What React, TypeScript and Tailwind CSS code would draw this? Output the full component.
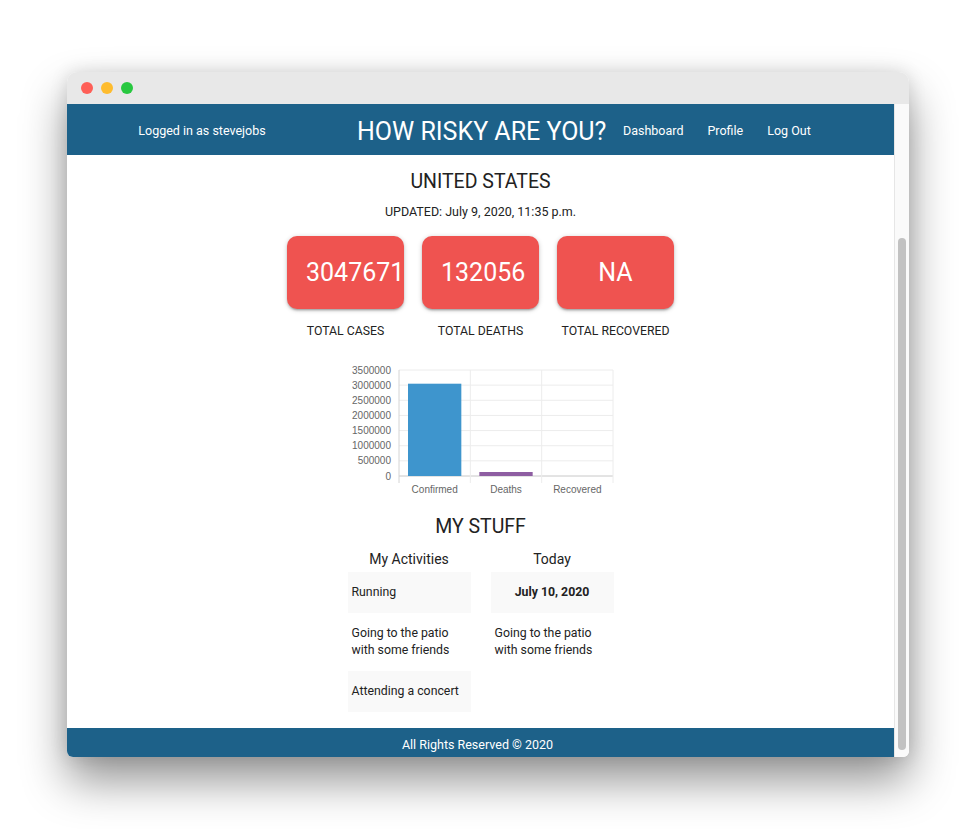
import React from "react";

const stats = [
  { value: "3047671", label: "TOTAL CASES" },
  { value: "132056", label: "TOTAL DEATHS" },
  { value: "NA", label: "TOTAL RECOVERED" },
];

const yTicks = ["3500000", "3000000", "2500000", "2000000", "1500000", "1000000", "500000", "0"];

function BarChart() {
  // chart area in svg coords: x 58..272, y 8..114
  const left = 58;
  const right = 272;
  const top = 8;
  const bottom = 114;
  const step = (bottom - top) / 7;
  const col = (right - left) / 3;
  const max = 3500000;
  const bars = [
    { label: "Confirmed", value: 3047671, color: "#3e95cd" },
    { label: "Deaths", value: 132056, color: "#8e5ea2" },
    { label: "Recovered", value: 0, color: "#3cba9f" },
  ];
  return (
    <svg width="280" height="136" viewBox="0 0 280 136" className="block">
      {yTicks.map((t, i) => {
        const y = top + i * step;
        return (
          <g key={t}>
            <line x1={left} x2={right} y1={y} y2={y} stroke={i === 7 ? "#c8c8c8" : "#ececec"} strokeWidth="1" />
            <text x={left - 8} y={y + 3.5} textAnchor="end" fontSize="10" fill="#666" fontFamily="Liberation Sans, Arial, sans-serif">
              {t}
            </text>
          </g>
        );
      })}
      {[0, 1, 2, 3].map((i) => {
        const x = left + i * col;
        return <line key={i} x1={x} x2={x} y1={top} y2={bottom + 7} stroke={i === 0 ? "#d4d4d4" : "#ececec"} strokeWidth="1" />;
      })}
      {bars.map((b, i) => {
        const h = (b.value / max) * (bottom - top);
        const x = left + i * col + 9;
        return (
          <g key={b.label}>
            {h > 0 && <rect x={x} y={bottom - h} width={col - 18} height={h} fill={b.color} />}
            <text x={left + i * col + col / 2} y={bottom + 17} textAnchor="middle" fontSize="10" fill="#666" fontFamily="Liberation Sans, Arial, sans-serif">
              {b.label}
            </text>
          </g>
        );
      })}
    </svg>
  );
}

export default function App() {
  return (
    <div className="min-h-[829px] w-[976px] bg-white pl-[67px] pt-[72px] font-['Roboto',sans-serif]">
      <div className="flex h-[685px] w-[842px] flex-col overflow-hidden rounded-t-[10px] rounded-b-[6px] bg-white shadow-[0_24px_45px_rgba(0,0,0,0.42),0_0_18px_rgba(0,0,0,0.12)]">
        {/* title bar */}
        <div className="flex h-8 shrink-0 items-center gap-2 bg-[#e8e8e8] pl-[14px]">
          <span className="h-[12px] w-[12px] rounded-full bg-[#fe5f57]" />
          <span className="h-[12px] w-[12px] rounded-full bg-[#febc2e]" />
          <span className="h-[12px] w-[12px] rounded-full bg-[#28c840]" />
        </div>

        <div className="flex min-h-0 flex-1">
          <div className="flex min-w-0 flex-1 flex-col overflow-hidden">
            {/* header */}
            <header className="flex h-[51px] shrink-0 items-center bg-[#1d6189] pt-1 text-white">
              <div className="w-[270px] text-center text-[12.5px]">Logged in as stevejobs</div>
              <div className="ml-5 w-[266px] text-[25px] leading-none">HOW RISKY ARE YOU?</div>
              <nav className="flex gap-6 text-[12.5px]">
                <a>Dashboard</a>
                <a>Profile</a>
                <a>Log Out</a>
              </nav>
            </header>

            {/* main */}
            <main className="flex flex-col items-center text-[#222]">
              <h1 className="mt-[15px] text-[19.5px] leading-6">UNITED STATES</h1>
              <p className="mt-[11px] text-[12.5px] leading-[14px]">UPDATED: July 9, 2020, 11:35 p.m.</p>

              <div className="mt-[17px] flex gap-[18px]">
                {stats.map((s) => (
                  <div key={s.label} className="flex w-[117px] flex-col items-center">
                    <div className="h-[73px] w-full rounded-[10px] bg-[#ef5350] px-[19px] text-center shadow-[0_2px_2px_rgba(0,0,0,0.14),0_3px_1px_-2px_rgba(0,0,0,0.12),0_1px_5px_rgba(0,0,0,0.2)]">
                      <span className="whitespace-nowrap text-[25px] leading-[73px] text-white">{s.value}</span>
                    </div>
                    <div className="mt-[15px] whitespace-nowrap text-[12.25px] leading-[14px]">{s.label}</div>
                  </div>
                ))}
              </div>

              <div className="mt-[24px]">
                <BarChart />
              </div>

              <h2 className="mt-[18px] text-[19.5px] leading-[22px]">MY STUFF</h2>

              <div className="mt-[13px] flex gap-5 text-[12.3px] leading-[17px]">
                <div className="w-[123px]">
                  <div className="text-center text-[14px] leading-4">My Activities</div>
                  <div className="mt-[5px]">
                    <div className="bg-[#f9f9f9] px-1 py-3">Running</div>
                    <div className="px-1 py-3">Going to the patio with some friends</div>
                    <div className="bg-[#f9f9f9] px-1 py-3">Attending a concert</div>
                  </div>
                </div>
                <div className="w-[123px]">
                  <div className="text-center text-[14px] leading-4">Today</div>
                  <div className="mt-[5px]">
                    <div className="bg-[#f9f9f9] px-1 py-3 text-center font-bold">July 10, 2020</div>
                    <div className="px-1 py-3">Going to the patio with some friends</div>
                  </div>
                </div>
              </div>
            </main>

            <footer className="mt-4 h-[44px] shrink-0 bg-[#1d6189] pr-[6px] pt-[10px] text-center text-[12.5px] leading-[14px] text-white">
              All Rights Reserved © 2020
            </footer>
          </div>

          {/* scrollbar */}
          <div className="flex w-[15px] shrink-0 flex-col border-l border-[#e6e6e6] bg-[#fafafa] px-[3px] pb-[7px] pt-[134px]">
            <div className="flex-1 rounded-full bg-[#c2c2c2]" />
          </div>
        </div>
      </div>
    </div>
  );
}
